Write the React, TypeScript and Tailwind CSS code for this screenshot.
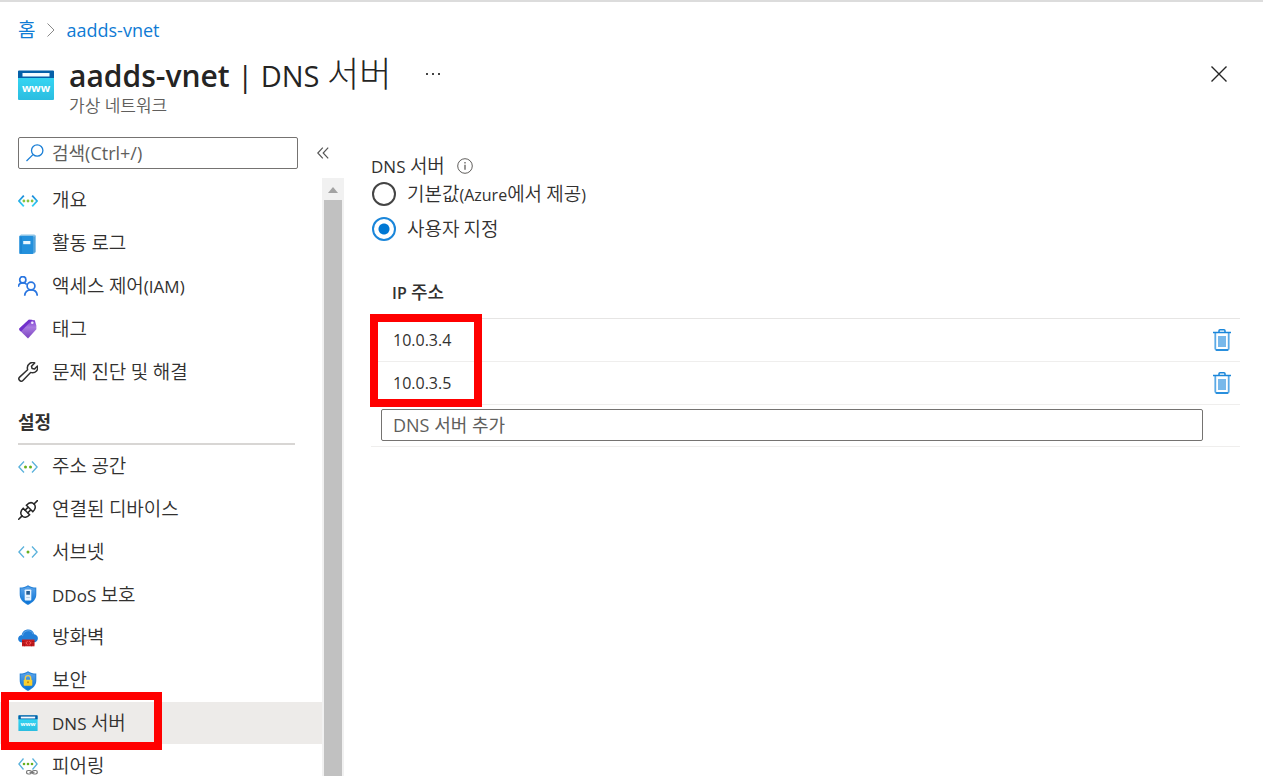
import { Fragment, useState, type ReactNode } from "react";

function Mixed({ text, size = "text-[19px] font-[350]" }: { text: string; size?: string }) {
  const parts = text.split(/([\uac00-\ud7a3]+)/).filter(Boolean);
  return (
    <>
      {parts.map((part, i) =>
        /[\uac00-\ud7a3]/.test(part) ? (
          <span key={i} className={size}>
            {part}
          </span>
        ) : (
          <Fragment key={i}>{part}</Fragment>
        )
      )}
    </>
  );
}

function Svg({ children }: { children: ReactNode }) {
  return (
    <svg viewBox="0 0 20 20" className="size-5 shrink-0" fill="none" aria-hidden="true">
      {children}
    </svg>
  );
}

function NetworkIcon() {
  return (
    <Svg>
      <defs>
        <linearGradient id="net" x1="0" y1="0" x2="0" y2="1">
          <stop offset="0" stopColor="#1988d9" />
          <stop offset="1" stopColor="#32d4f5" />
        </linearGradient>
      </defs>
      <path d="M5.8 4.6 0.9 10l4.9 5.4M14.2 4.6l4.9 5.4-4.9 5.4" stroke="url(#net)" strokeWidth="1.8" />
      <g fill="#86c440">
        <circle cx="5.9" cy="10" r="1.4" />
        <circle cx="10" cy="10" r="1.4" />
        <circle cx="14.1" cy="10" r="1.4" />
      </g>
    </Svg>
  );
}

function BookIcon() {
  return (
    <Svg>
      <path d="M3 0.500h13.400l1.600 1.200v16L16.500 19.500H15V3H1.200V2z" fill="#8cc4e8" />
      <path d="M16.200 2.500v16" stroke="#3f92d0" />
      <rect x="1.200" y="2" width="14.300" height="18" rx="1" fill="#2390dc" />
      <path d="M3 3v16" stroke="#1377c4" strokeWidth="0.800" />
      <rect x="5.200" y="7" width="7.200" height="3.200" fill="#e8f6ff" />
    </Svg>
  );
}

function PeopleIcon() {
  return (
    <Svg>
      <g stroke="#2a76e0" strokeWidth="1.700">
        <circle cx="4.800" cy="3.700" r="3.100" />
        <circle cx="13" cy="10" r="3.900" />
        <path d="M0.300 10.800c.3-2.300 1.900-4 4.500-4 1.600 0 3 .5 4 1.700M6.700 19.700c.3-3.400 2.600-5.800 6.300-5.800s6 2.400 6.300 5.800" />
      </g>
    </Svg>
  );
}

function TagIcon() {
  return (
    <Svg>
      <defs>
        <linearGradient id="tag" x1="0" y1="0" x2="0" y2="1">
          <stop offset="0" stopColor="#7a3ad0" />
          <stop offset="0.400" stopColor="#a97be0" />
          <stop offset="1" stopColor="#7b42c0" />
        </linearGradient>
      </defs>
      <path d="M10.800 0.800 16.800 1.200l1.600 5.500v3.500L10 19.500 1.300 11v-1.500z" fill="url(#tag)" />
      <path d="M1.300 9.500 10.800 0.800h3.500L3 12.600 1.300 11z" fill="#7130cc" />
      <circle cx="14.300" cy="3.700" r="1.300" fill="#f2e8ff" />
    </Svg>
  );
}

function WrenchIcon() {
  return (
    <Svg>
      <path
        d="M1.600 18.400c-1-1-1-2.300 0-3.300l8-7.400c-.7-2.600.2-5 2.200-6.300 1.500-1 3.300-1.100 4.900-.5l-3.200 3.300.6 2.300 2.300.6 3.100-3.100c.5 1.800.2 3.600-1 4.900-1.500 1.700-3.600 2.200-5.900 1.500l-7.700 8c-1 1-2.300 1-3.300 0Z"
        stroke="#303030"
        strokeWidth="1.500"
        strokeLinejoin="round"
      />
    </Svg>
  );
}

function AngleIcon({ dots }: { dots: number[] }) {
  return (
    <Svg>
      <path d="M6 4.500 0.900 10 6 15.500M14 4.500l5.100 5.500-5.100 5.500" stroke="#5ab2dc" strokeWidth="1.300" />
      {dots.map((x) => (
        <circle key={x} cx={x} cy="10" r="1.500" fill="#68b020" />
      ))}
    </Svg>
  );
}

function PlugIcon() {
  return (
    <Svg>
      <g stroke="#252525" strokeWidth="1.500" strokeLinecap="round">
        <path d="m0.700 19.300 3.400-3.400M16 4l3.400-3.400" />
        <path d="M5.200 8.200 11.600 14.800C9.300 17.500 6 18 4 16s-1.500-5.200 1.200-7.800Z" />
        <path d="M8.400 5.200 14.800 11.800c2.800-2.600 3.200-5.900 1.200-7.800s-5-1.500-7.600 1.200Z" />
        <path d="m7 10.200 2.500-2.300M9.800 12.800l2.500-2.400" />
      </g>
    </Svg>
  );
}

function ShieldShape() {
  return (
    <>
      <defs>
        <linearGradient id="shield" x1="0" y1="0" x2="0" y2="1">
          <stop offset="0" stopColor="#5ea5ea" />
          <stop offset="1" stopColor="#0873d6" />
        </linearGradient>
      </defs>
      <path d="M10 0.300c2.300 1.700 5 2.300 8.300 2.300v6.700c0 5-3 8-8.300 10.700-5.300-2.700-8.300-5.700-8.300-10.700V2.600C5 2.600 7.700 2 10 .3Z" fill="#2582d8" />
      <path d="M10 1.500c2.200 1.400 4.600 2 7.300 2v5.900c0 4.300-2.700 7-7.300 9.300-4.600-2.300-7.300-5-7.300-9.300V3.500c2.700 0 5.100-.6 7.300-2Z" fill="url(#shield)" />
    </>
  );
}

function DdosIcon() {
  return (
    <Svg>
      <ShieldShape />
      <rect x="6.700" y="4.500" width="6.600" height="11" rx="0.700" fill="#e6f3ff" />
      <rect x="8.300" y="6" width="3.600" height="3.700" fill="#245c92" />
      <path d="M8.200 12.500h3.600" stroke="#b7ccdf" />
    </Svg>
  );
}

function LockIcon() {
  return (
    <Svg>
      <ShieldShape />
      <path d="M7.300 9V7.300a2.700 2.700 0 0 1 5.400 0V9" stroke="#f4cf48" strokeWidth="1.400" />
      <rect x="5.700" y="8.700" width="8.600" height="6" rx="0.700" fill="#f9cf2e" />
      <circle cx="10" cy="11.300" r="1" fill="#c88808" />
    </Svg>
  );
}

function FirewallIcon() {
  return (
    <Svg>
      <path d="M4.800 14.500C1.800 14.500.1 13 .1 10.800c0-2 1.500-3.500 3.600-3.800C4.300 3.600 6.800 1.500 10.200 1.500c3.100 0 5.300 1.900 6 4.700 2.300.3 3.700 2 3.700 4.100 0 2.400-1.900 4.200-4.500 4.200Z" fill="#217ed8" />
      <path d="M4.500 8c.4-3.300 2.500-5.300 5.700-5.300 2.500 0 4.300 1.300 4.900 3.500" stroke="#62a9ea" />
      <rect x="4" y="11.500" width="12.500" height="6.800" fill="#c81c20" />
      <path d="M4 13.500h2.500M14 13.500h2.500M4 16h2.500M14 16h2.500M6.500 16v2.300M13.500 16v2.300" stroke="#8e1014" strokeWidth="0.600" />
      <path d="m9.500 13.200-1.500 1.700 1.500 1.700M11.300 13.200l1.500 1.700-1.500 1.700" stroke="#ff7070" strokeWidth="0.800" />
    </Svg>
  );
}

function DnsIcon({ large }: { large?: boolean }) {
  return (
    <svg viewBox="0 0 36 30" className={large ? "h-[30px] w-9 shrink-0" : "h-4 w-5 shrink-0"} aria-hidden="true">
      <defs>
        <linearGradient id="dns" x1="0" y1="0" x2="0" y2="1">
          <stop offset="0" stopColor="#38dcf8" />
          <stop offset="1" stopColor="#2bbde0" />
        </linearGradient>
      </defs>
      <rect x="0" y="1" width="36" height="29" rx="1" fill="url(#dns)" />
      <path d="M1 0.500h34a1 1 0 0 1 1 1V8H0V1.500a1 1 0 0 1 1-1Z" fill="#0560a8" />
      <rect x="4.500" y="3" width="27" height="3.500" fill="#f5fbff" />
      <text x="18" y="21.500" textAnchor="middle" fontSize="11" fontWeight="700" fill="#fff">
        www
      </text>
    </svg>
  );
}

function PeeringIcon() {
  return (
    <Svg>
      <path d="M5.500 2.500 0.900 8l4.600 5.500M14.500 2.500 19.100 8l-4.600 5.500" stroke="#5ab2dc" strokeWidth="1.300" />
      <g fill="#68b020">
        <circle cx="6" cy="8" r="1.300" />
        <circle cx="10" cy="8" r="1.300" />
        <circle cx="14" cy="8" r="1.300" />
      </g>
      <g stroke="#777" strokeWidth="1.200">
        <rect x="8.500" y="14.500" width="5" height="3.500" rx="1.700" />
        <rect x="14.300" y="14.500" width="5" height="3.500" rx="1.700" />
        <path d="M11.500 16.300h5" />
      </g>
    </Svg>
  );
}

function TrashIcon() {
  return (
    <svg viewBox="0 0 18 22" className="h-[22px] w-[18px]" fill="none" aria-hidden="true">
      <path d="M2.300 4v15.500a1.500 1.500 0 0 0 1.500 1.500h10.400a1.500 1.500 0 0 0 1.500-1.500V4" stroke="#5aa9e6" strokeWidth="1.800" />
      <path d="M0 3.500h18M6 3V1.800c0-.6.400-1 1-1h4c.6 0 1 .4 1 1V3M3 21h12" stroke="#1a86da" strokeWidth="1.500" />
      <rect x="5" y="7" width="8" height="11" fill="#78b8ea" />
    </svg>
  );
}

type Item = { label: string; icon: ReactNode; active?: boolean };

const general: Item[] = [
  { label: "개요", icon: <NetworkIcon /> },
  { label: "활동 로그", icon: <BookIcon /> },
  { label: "액세스 제어(IAM)", icon: <PeopleIcon /> },
  { label: "태그", icon: <TagIcon /> },
  { label: "문제 진단 및 해결", icon: <WrenchIcon /> },
];

const settings: Item[] = [
  { label: "주소 공간", icon: <AngleIcon dots={[7.5, 12.5]} /> },
  { label: "연결된 디바이스", icon: <PlugIcon /> },
  { label: "서브넷", icon: <AngleIcon dots={[10]} /> },
  { label: "DDoS 보호", icon: <DdosIcon /> },
  { label: "방화벽", icon: <FirewallIcon /> },
  { label: "보안", icon: <LockIcon /> },
  { label: "DNS 서버", icon: <DnsIcon />, active: true },
  { label: "피어링", icon: <PeeringIcon /> },
];

function NavItem({ item }: { item: Item }) {
  return (
    <li className={item.active ? "relative bg-[#edebe9]" : ""}>
      <a
        href="#"
        aria-current={item.active ? "page" : undefined}
        className="flex h-full items-center gap-3.5 pt-px pl-[18px] whitespace-nowrap"
      >
        {item.icon}
        <span className="text-[17px] leading-5">
          <Mixed text={item.label} />
        </span>
      </a>
      {item.active && (
        <span className="pointer-events-none absolute -top-2.5 left-px h-[58px] w-[161px] border-8 border-[#ff0000]" />
      )}
    </li>
  );
}

export default function App() {
  const [mode, setMode] = useState("custom");
  const radio =
    "size-6 shrink-0 appearance-none rounded-full border-2 border-[#444] bg-white checked:border-[#1a86da] checked:bg-[radial-gradient(circle,#0078d4_5px,transparent_6px)]";

  return (
    <div className="flex h-screen flex-col overflow-hidden border-t-2 border-[#dcdcdc] bg-white font-['Open_Sans','Noto_Sans_CJK_KR',sans-serif] text-[16px] text-[#323130]">
      <header className="px-[18px]">
        <nav aria-label="breadcrumb" className="flex h-[54px] items-center gap-3 pt-0.5 text-[18px] text-[#0f7bd4]">
          <a href="#" className="leading-6">
            <Mixed text="홈" size="text-[19px]" />
          </a>
          <svg viewBox="0 0 8 14" className="h-3.5 w-2" fill="none" stroke="#888" aria-hidden="true">
            <path d="m0.500 0.500 6.500 6.500-6.500 6.500" />
          </svg>
          <a href="#" className="-ml-px leading-6">
            aadds-vnet
          </a>
        </nav>
        <div className="flex h-[62px] items-start">
          <div className="mr-[15px] pt-3.5">
            <DnsIcon large />
          </div>
          <div>
            <h1 className="flex h-[38px] items-baseline text-[30px] leading-9 whitespace-pre text-[#252423]">
              <span className="font-semibold">aadds-vnet</span>
              <span className="text-[29px]"> | <Mixed text="DNS 서버" size="text-[35px] font-light" /></span>
            </h1>
            <p className="text-[17px] leading-6 font-[350] text-[#605e5c]">가상 네트워크</p>
          </div>
          <button type="button" aria-label="추가 작업" className="mt-2 ml-8 flex h-5 w-5 items-center justify-center gap-1">
            <span className="size-0.5 bg-[#444]" />
            <span className="size-0.5 bg-[#444]" />
            <span className="size-0.5 bg-[#444]" />
          </button>
          <button type="button" aria-label="닫기" className="mt-2.5 mr-[18px] ml-auto">
            <svg viewBox="0 0 16 16" className="size-4" stroke="#252525" strokeWidth="1.400" aria-hidden="true">
              <path d="m0.500 0.500 15 15M15.500 0.500l-15 15" />
            </svg>
          </button>
        </div>
      </header>

      <div className="flex min-h-0 flex-1">
        <aside className="flex w-[344px] shrink-0 flex-col">
          <div className="flex items-center pt-[19px] pl-[18px]">
            <label className="flex h-8 w-[280px] items-center rounded-[2px] border border-[#757371] px-[7px]">
              <svg viewBox="0 0 18 18" className="size-[18px] shrink-0" fill="none" stroke="#1a7fd6" strokeWidth="1.300" aria-hidden="true">
                <circle cx="11.200" cy="6.500" r="5.700" />
                <path d="m7 10.600-6.500 6.400" />
              </svg>
              <input
                type="search"
                aria-label="검색"
                placeholder="검색(Ctrl+/)"
                className="ml-2 min-w-0 flex-1 text-[18px] outline-none placeholder:text-[#605e5c]"
              />
            </label>
            <button type="button" aria-label="메뉴 축소" className="ml-[19px]">
              <svg viewBox="0 0 12 12" className="size-3" fill="none" stroke="#555" strokeWidth="1.200" aria-hidden="true">
                <path d="M5.800 0.700.8 6l5 5.300M11.200.7l-5 5.300 5 5.300" />
              </svg>
            </button>
          </div>
          <div className="mt-[9px] flex min-h-0 flex-1">
            <nav aria-label="메뉴" className="min-w-0 flex-1 overflow-hidden pt-px">
              <ul className="grid h-[214px] auto-rows-fr">
                {general.map((item) => (
                  <NavItem key={item.label} item={item} />
                ))}
              </ul>
              <h2 className="mr-[27px] ml-[18px] flex h-[52px] items-center border-b-2 border-[#d8d6d4] pt-2 text-[18px] font-semibold">
                설정
              </h2>
              <ul className="grid h-[342px] auto-rows-fr">
                {settings.map((item) => (
                  <NavItem key={item.label} item={item} />
                ))}
              </ul>
            </nav>
            <div className="flex w-[22px] flex-col items-center bg-[#f1f1f1]" aria-hidden="true">
              <svg viewBox="0 0 22 22" className="size-[22px]" fill="#a3a3a3">
                <path d="m6 15 5-6 5 6z" />
              </svg>
              <div className="w-[18px] flex-1 bg-[#c1c1c1]" />
            </div>
          </div>
        </aside>

        <main className="min-w-0 flex-1 pt-9 pr-[23px] pl-[27px]">
          <fieldset>
            <legend className="flex h-6 items-center gap-3 text-[17px] leading-6">
              <span>
                <Mixed text="DNS 서버" />
              </span>
              <svg viewBox="0 0 16 16" className="size-4" fill="none" stroke="#605e5c" aria-hidden="true">
                <circle cx="8" cy="8" r="7.300" />
                <path d="M8 6.800v5M8 4v1.500" strokeWidth="1.300" />
              </svg>
            </legend>
            <div className="flex flex-col gap-[11px] pt-1 pl-px">
              <label className="flex h-6 items-center gap-[11px]">
                <input type="radio" name="dns" className={radio} checked={mode === "default"} onChange={() => setMode("default")} />
                <span className="leading-6">
                  <Mixed text="기본값(Azure에서 제공)" />
                </span>
              </label>
              <label className="flex h-6 items-center gap-[11px]">
                <input type="radio" name="dns" className={radio} checked={mode === "custom"} onChange={() => setMode("custom")} />
                <span className="leading-6">
                  <Mixed text="사용자 지정" />
                </span>
              </label>
            </div>
          </fieldset>

          <div className="relative mt-[27px]">
            <table className="w-full border-collapse text-left">
              <thead>
                <tr className="h-[50px] border-b border-[#e6e5e4]">
                  <th colSpan={2} className="pl-[21px] leading-6 font-semibold">
                    <Mixed text="IP 주소" size="text-[18px] font-medium" />
                  </th>
                </tr>
              </thead>
              <tbody>
                {["10.0.3.4", "10.0.3.5"].map((ip) => (
                  <tr key={ip} className="h-[43px] border-b border-[#efeeed]">
                    <td className="p-0 pl-[22px]">{ip}</td>
                    <td className="w-10 p-0">
                      <button type="button" aria-label={`${ip} 삭제`} className="ml-[13px] block">
                        <TrashIcon />
                      </button>
                    </td>
                  </tr>
                ))}
                <tr className="h-[42px] border-b border-[#efeeed]">
                  <td colSpan={2} className="p-0 pr-[37px] pl-2.5">
                    <input
                      type="text"
                      aria-label="DNS 서버 추가"
                      placeholder="DNS 서버 추가"
                      className="block h-8 w-full rounded-[2px] border border-[#757371] px-[11px] text-[18px] outline-none placeholder:text-[#605e5c]"
                    />
                  </td>
                </tr>
              </tbody>
            </table>
            <span className="pointer-events-none absolute top-[46px] -left-px h-[93px] w-28 border-8 border-[#ff0000]" />
          </div>
        </main>
      </div>
    </div>
  );
}
